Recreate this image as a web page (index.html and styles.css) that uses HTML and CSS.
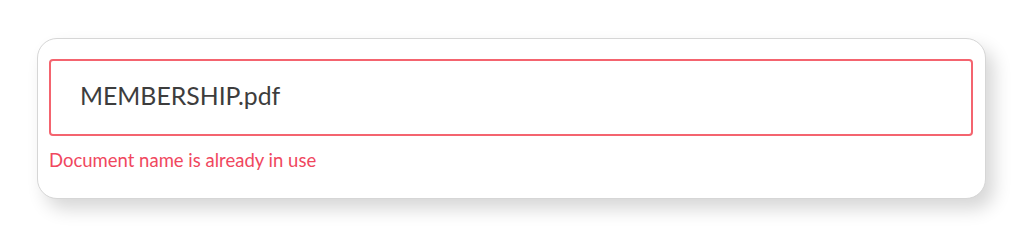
FILE: index.html
```html
<!DOCTYPE html>
<html>
<head>
<meta charset="utf-8">
<link rel="stylesheet" href="styles.css">
</head>
<body>
<div class="page">
  <div class="card">
    <div class="field">
      <div class="input">MEMBERSHIP.pdf</div>
      <div class="error">Document name is already in use</div>
    </div>
  </div>
</div>
</body>
</html>
```

FILE: styles.css
```css
html, body {
  margin: 0;
  padding: 0;
  background: #ffffff;
}
.page {
  box-sizing: border-box;
  min-height: 239px;
  padding: 38px 0 0 37px;
}
.card {
  box-sizing: border-box;
  width: 949px;
  height: 161px;
  border: 1px solid #d6d6d6;
  border-radius: 20px;
  background: #fff;
  box-shadow: 8px 10px 18px rgba(0, 0, 0, 0.16);
  padding: 20px 12px 0 11px;
}
.input {
  box-sizing: border-box;
  height: 77px;
  border: 2px solid #f4646f;
  border-radius: 4px;
  padding: 0 0 4px 29px;
  display: flex;
  align-items: center;
  font-family: Lato, "Open Sans", sans-serif;
  font-size: 24.8px;
  color: #3d3d3d;
}
.error {
  margin-top: 13px;
  font-family: Lato, "Open Sans", sans-serif;
  font-size: 18.5px;
  color: #f0475e;
}
```
